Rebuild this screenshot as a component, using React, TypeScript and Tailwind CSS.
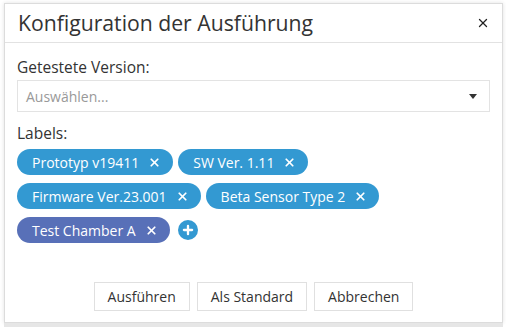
import { Plus, X } from 'lucide-react';

const labels = [
  ['Prototyp v19411', 'SW Ver. 1.11'],
  ['Firmware Ver.23.001', 'Beta Sensor Type 2'],
];

function Chip({ text, dark }: { text: string; dark?: boolean }) {
  return (
    <span
      className={
        'flex h-[26px] items-center gap-[9px] rounded-full pl-[15px] pr-[12px] text-[14px] text-white ' +
        (dark ? 'bg-[#5870b8]' : 'bg-[#3399d2]')
      }
    >
      {text}
      <X className="h-[13px] w-[13px]" strokeWidth={3.2} />
    </span>
  );
}

export default function App() {
  return (
    <div
      className="flex h-[327px] w-[506px] flex-col bg-white pl-[4px] pr-[3px] pt-[3px] text-[#333]"
      style={{ fontFamily: '"Open Sans", "Noto Sans", sans-serif' }}
    >
      <div className="flex h-[320px] flex-col border border-[#dcdcdc] bg-white shadow-[0_0_4px_rgba(0,0,0,0.12)]">
        {/* Kopfzeile */}
        <div className="flex h-[39px] items-center justify-between border-b border-[#e2e2e2] pl-[13px] pr-[12px]">
          <h1 className="text-[21.2px] text-[#333]">Konfiguration der Ausführung</h1>
          <X className="h-[14px] w-[14px] text-[#222]" strokeWidth={2.2} />
        </div>

        <div className="flex flex-1 flex-col px-[12px] pt-[14px]">
          <label className="text-[15.5px] leading-[20px] text-[#333]">Getestete Version:</label>
          <div className="mt-[3px] flex h-[32px] items-center justify-between border border-[#e3e3e3] pl-[8px] pr-[12px]">
            <span className="text-[14px] text-[#999]">Auswählen...</span>
            <span className="h-0 w-0 border-x-[4px] border-t-[5px] border-x-transparent border-t-[#333]" />
          </div>

          <label className="mt-[11px] text-[15.5px] leading-[20px] text-[#333]">Labels:</label>
          <div className="mt-[6px] flex flex-col gap-[8px]">
            {labels.map((row, i) => (
              <div key={i} className="flex gap-[5px]">
                {row.map(t => (
                  <Chip key={t} text={t} />
                ))}
              </div>
            ))}
            <div className="flex items-center gap-[8px]">
              <Chip text="Test Chamber A" dark />
              <span className="flex h-[20px] w-[20px] items-center justify-center rounded-full bg-[#3399d2]">
                <Plus className="h-[14px] w-[14px] text-white" strokeWidth={4} />
              </span>
            </div>
          </div>

          <div className="mt-auto mb-[11px] flex justify-center gap-[7px]">
            {['Ausführen', 'Als Standard', 'Abbrechen'].map(b => (
              <button
                key={b}
                className="h-[29px] border border-[#e0e0e0] bg-white px-[13px] text-[14px] text-[#333]"
              >
                {b}
              </button>
            ))}
          </div>
        </div>
      </div>
      <div className="mt-auto h-[4px] bg-[#e6e6e6]" />
    </div>
  );
}
